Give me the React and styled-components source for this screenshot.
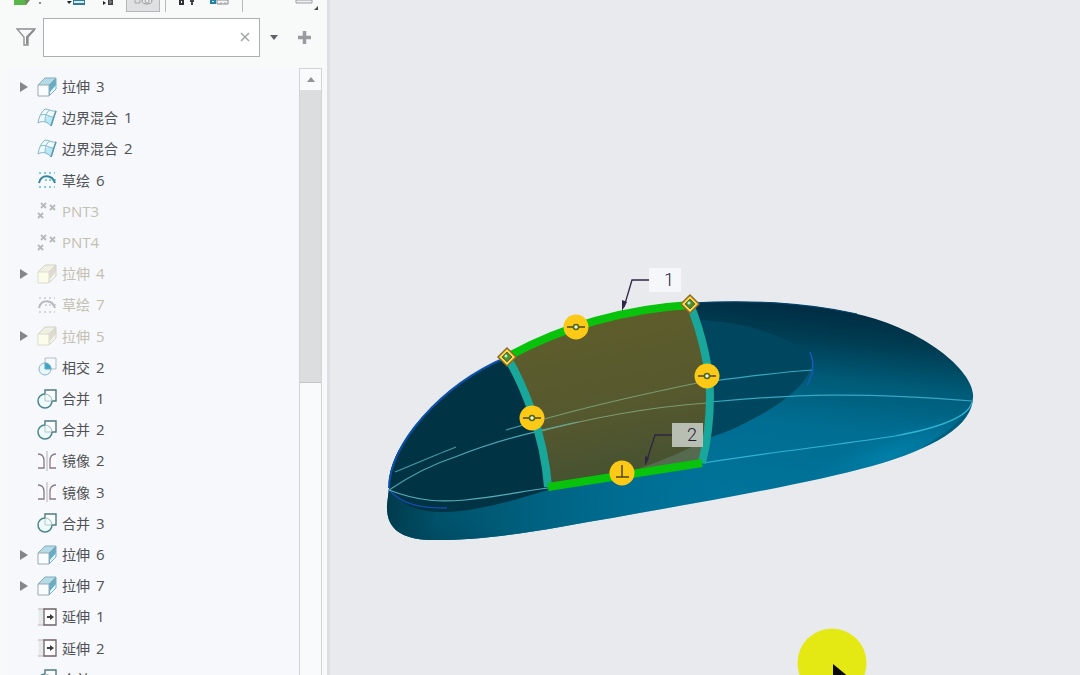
import React from "react";
import styled, { createGlobalStyle } from "styled-components";

const GlobalStyle = createGlobalStyle`
  *, *::before, *::after { box-sizing: border-box; }
  body {
    margin: 0;
    overflow: hidden;
    background: #e8eaee;
    color: #4b4c50;
    font: 14px/20px "Open Sans", "Noto Sans", "Noto Sans CJK SC", sans-serif;
  }
  button { font: inherit; color: inherit; }
`;

const Workspace = styled.div`
  display: flex;
  height: 100vh;
  overflow: hidden;
`;

const Sidebar = styled.aside`
  flex: 0 0 327px;
  display: flex;
  flex-direction: column;
  min-width: 0;
  min-height: 0;
  background: #f8fafa;
`;

const Toolbar = styled.div`
  display: flex;
  align-items: flex-start;
  flex: 0 0 17px;
  padding-left: 10px;
`;

const ToolButton = styled.button`
  display: flex;
  justify-content: center;
  width: ${(p) => p.$width}px;
  height: 12px;
  padding: 0;
  overflow: hidden;
  border: solid ${(p) => (p.$pressed ? "#b4b6b8" : "transparent")};
  border-width: 0 1px 1px;
  background: ${(p) => (p.$pressed ? "#dfe0e1" : "transparent")};
  svg { flex: none; }
`;

const Divider = styled.span`
  width: 1px;
  height: 12px;
  margin: 0 5px;
  background: #b8babb;
`;

const Push = styled.span`
  flex: 1;
`;

const FilterBar = styled.form`
  display: flex;
  align-items: center;
  flex: 0 0 40px;
  padding: 0 7px 0 16px;
`;

const FunnelLabel = styled.label`
  display: flex;
  width: 27px;
`;

const SearchField = styled.div`
  display: flex;
  flex: 1;
  min-width: 0;
  height: 39px;
  border: 1px solid #acaeb0;
  background: #fff;
`;

const SearchInput = styled.input`
  flex: 1;
  min-width: 0;
  padding: 0 8px;
  border: 0;
  outline: 0;
  background: transparent;
  font: inherit;
`;

const PlainButton = styled.button`
  display: flex;
  align-items: center;
  justify-content: center;
  width: ${(p) => p.$width || 28}px;
  height: 37px;
  padding: 0;
  border: 0;
  background: transparent;
`;

const TreePane = styled.div`
  display: flex;
  flex: 1;
  min-height: 0;
  margin: 10px 5px 0 8px;
  overflow: hidden;
  background: #f6f8fb;
`;

const TreeList = styled.ul`
  display: grid;
  flex: 1;
  grid-auto-rows: 1fr;
  height: 624px;
  margin: 0;
  padding: 4px 0 0 8px;
  box-sizing: content-box;
  list-style: none;
`;

const TreeRow = styled.li`
  display: flex;
  align-items: center;
  min-height: 0;
  color: ${(p) => (p.$muted ? "#c3c0b1" : "#505155")};
`;

const Toggle = styled.button`
  display: flex;
  align-items: center;
  justify-content: center;
  width: 16px;
  height: 20px;
  margin-right: 5px;
  padding: 0;
  border: 0;
  background: transparent;
  visibility: ${(p) => (p.$visible ? "visible" : "hidden")};
`;

const FeatureName = styled.span`
  padding-left: 5px;
  white-space: pre;
`;

const Latin = styled.span`
  padding-left: ${(p) => (p.$spaced ? 2 : 0)}px;
  font-size: 15px;
`;

const ScrollBar = styled.div`
  display: flex;
  flex-direction: column;
  width: 23px;
  margin-top: 1px;
  border: solid #d3d4d7;
  border-width: 1px 1px 0;
  background: #f8fafb;
`;

const ScrollUp = styled.button`
  display: flex;
  align-items: center;
  justify-content: center;
  height: 21px;
  padding: 0;
  border: 0;
  background: #f9fafb;
`;

const ScrollThumb = styled.div`
  height: 293px;
  border-bottom: 1px solid #c3c4c7;
  background: #dcdddf;
`;

const Viewport = styled.main`
  flex: 1;
  min-width: 0;
  border-left: 3px solid #dddfe4;
  background: #e8eaee;
  overflow: hidden;
  svg { display: block; }
`;

const DimensionText = styled.text`
  fill: #211c38;
  font: 300 18px "Roboto", "Liberation Sans", sans-serif;
`;

function ExtrudeIcon({ muted }) {
  const edge = muted ? "#d3d2c6" : "#82aebd";
  return (
    <svg width="20" height="20" viewBox="0 0 20 20" aria-hidden="true">
      <path d="M1 8 8 1H19L12 8Z" fill={muted ? "#efefe4" : "#b5dbe7"} />
      <path d="M12 8 19 1V12L12 19Z" fill={muted ? "#dedbd1" : "#68acc4"} />
      <path d="M13 15 19 8V12L13 18Z" fill={muted ? "#f7f7ee" : "#e0fbff"} />
      <path d="M1 8 8 1H19V12L12 19M12 8 19 1" fill="none" stroke={edge} />
      <path d="M1 8H12V19H1Z" fill={muted ? "#fbfcea" : "#fafdff"} stroke={muted ? "#dddccf" : "#9ba9af"} />
    </svg>
  );
}

function BlendIcon() {
  return (
    <svg width="20" height="20" viewBox="0 0 20 20" fill="none" aria-hidden="true">
      <path d="M1 15C2 9 4 4 8 1C12 1 15 4 19 3C17 8 16 12 14 18C11 14 6 12 1 15Z" fill="#effafd" />
      <path d="M11 7C13 8 15 9 16 9C16 12 15 15 14 18L8 14C9 11 9 9 11 7Z" fill="#b9e8f6" />
      <path d="M1 15C2 9 4 4 8 1C12 1 15 4 19 3C17 8 16 12 14 18C11 14 6 12 1 15ZM4 7C9 5 12 9 16 9M8 14C8 9 9 4 13 2" stroke="#86b5c4" />
      <path d="M19 3C17 8 16 12 14 18" stroke="#5e97ab" strokeWidth="1.5" />
    </svg>
  );
}

function SketchIcon({ muted }) {
  return (
    <svg width="20" height="20" viewBox="0 0 20 20" fill="none" aria-hidden="true">
      <path d="M2 3H18M2 10H4M8 10H10M12 10H14M17 10H19M2 17H18" stroke={muted ? "#d3d5dc" : "#7fcbe0"} strokeWidth="2" strokeDasharray="2 3" />
      <path d="M2 13C4 4 15 4 18 13" stroke={muted ? "#b8b6c0" : "#35869c"} strokeWidth="2" />
    </svg>
  );
}

function PointsIcon() {
  return (
    <svg width="20" height="20" viewBox="0 0 20 20" aria-hidden="true">
      <path d="m4 2 5 5m0-5L4 7m9-3 5 5m0-5-5 5M1 12l5 5m0-5-5 5" stroke="#b8b8bb" strokeWidth="1.8" />
    </svg>
  );
}

function IntersectIcon() {
  return (
    <svg width="20" height="20" viewBox="0 0 20 20" fill="none" aria-hidden="true">
      <path d="M8 1H19V12H8Z" stroke="#b3bfc8" />
      <circle cx="8" cy="12" r="6" fill="#e7f8fc" stroke="#8cb4c1" />
      <path d="M8 6A6 6 0 0 1 14 12H8Z" fill="#38a8c8" stroke="#62a7bc" />
    </svg>
  );
}

function MergeIcon() {
  return (
    <svg width="20" height="20" viewBox="0 0 20 20" fill="none" aria-hidden="true">
      <path d="M8 5V1H19V12H15" fill="#fbfdfd" stroke="#4f7b80" strokeWidth="1.4" />
      <circle cx="8" cy="12" r="7" fill="#eefbfa" />
      <path d="M15 12H8V5" stroke="#bcc5c9" />
      <path d="M8 5A7 7 0 1 0 15 12" stroke="#4b868d" strokeWidth="1.5" />
      <path d="M8 5A7 7 0 0 1 15 12" stroke="#9db5b9" />
    </svg>
  );
}

function MirrorIcon() {
  return (
    <svg width="20" height="20" viewBox="0 0 20 20" fill="none" aria-hidden="true">
      <path d="M2 3C6 3 7 7 7 10V17H2Z" fill="#fcfcfe" />
      <path d="M19 3C14 3 13 7 13 10V17H19Z" fill="#fcfcfe" />
      <path d="M1 3C6 3 7 7 7 10V17H1M19 3C14 3 13 7 13 10V17H19" stroke="#8a7a89" strokeWidth="1.3" />
      <path d="M10 0V20" stroke="#b3b0ba" />
    </svg>
  );
}

function ExtendIcon() {
  return (
    <svg width="20" height="20" viewBox="0 0 20 20" fill="none" aria-hidden="true">
      <path d="M1 2H8V18H1" fill="#eff1f3" stroke="#b8b1b6" />
      <path d="M3 3V17M5 3V17" stroke="#dfe2e6" />
      <path d="M7 2H19V18H7Z" fill="#fff" stroke="#6e6267" strokeWidth="1.3" />
      <path d="M10 9H13V7L17 10 13 13V11H10Z" fill="#3b3c40" />
    </svg>
  );
}

const featureIcons = {
  extrude: ExtrudeIcon,
  blend: BlendIcon,
  sketch: SketchIcon,
  points: PointsIcon,
  intersect: IntersectIcon,
  merge: MergeIcon,
  mirror: MirrorIcon,
  extend: ExtendIcon,
};

const features = [
  { name: "拉伸", number: 3, icon: "extrude", group: true },
  { name: "边界混合", number: 1, icon: "blend" },
  { name: "边界混合", number: 2, icon: "blend" },
  { name: "草绘", number: 6, icon: "sketch" },
  { name: "PNT3", icon: "points", muted: true },
  { name: "PNT4", icon: "points", muted: true },
  { name: "拉伸", number: 4, icon: "extrude", group: true, muted: true },
  { name: "草绘", number: 7, icon: "sketch", muted: true },
  { name: "拉伸", number: 5, icon: "extrude", group: true, muted: true },
  { name: "相交", number: 2, icon: "intersect" },
  { name: "合并", number: 1, icon: "merge" },
  { name: "合并", number: 2, icon: "merge" },
  { name: "镜像", number: 2, icon: "mirror" },
  { name: "镜像", number: 3, icon: "mirror" },
  { name: "合并", number: 3, icon: "merge" },
  { name: "拉伸", number: 6, icon: "extrude", group: true },
  { name: "拉伸", number: 7, icon: "extrude", group: true },
  { name: "延伸", number: 1, icon: "extend" },
  { name: "延伸", number: 2, icon: "extend" },
  { name: "合并", number: 4, icon: "merge" },
];

function Feature({ item }) {
  const Icon = featureIcons[item.icon];
  return (
    <TreeRow $muted={item.muted}>
      <Toggle type="button" $visible={item.group} aria-label={`展开 ${item.name}`}>
        <svg width="10" height="12" viewBox="0 0 10 12" aria-hidden="true">
          <path d="M1 1 9 6 1 11Z" fill="#85868a" />
        </svg>
      </Toggle>
      <Icon muted={item.muted} />
      <FeatureName>
        {item.number ? (
          <>
            {item.name}
            <Latin $spaced>{` ${item.number}`}</Latin>
          </>
        ) : (
          <Latin>{item.name}</Latin>
        )}
      </FeatureName>
    </TreeRow>
  );
}

function TopTools() {
  return (
    <Toolbar role="toolbar" aria-label="模型树工具">
      <ToolButton type="button" $width={38} aria-label="模型">
        <svg width="36" height="13" viewBox="0 0 36 13">
          <path d="M3 0H18L15 5H3Z" fill="#5ab54a" />
          <path d="M14 0H19L15 5Z" fill="#71865f" />
          <path d="M28 2H30V4H28Z" fill="#8c8d8e" />
        </svg>
      </ToolButton>
      <ToolButton type="button" $width={46} aria-label="显示">
        <svg width="44" height="13" viewBox="0 0 44 13">
          <path d="M18 1H23L20 4Z" fill="#222" />
          <path d="M24 0H36V5H24Z" fill="#35799a" />
          <path d="M25 1H35V3H25Z" fill="#d2edf5" />
        </svg>
      </ToolButton>
      <ToolButton type="button" $width={32} aria-label="展开全部">
        <svg width="30" height="13" viewBox="0 0 30 13">
          <path d="M8 1 11 3 8 5Z" fill="#222" />
          <path d="M13 0H18V5H13Z" fill="#404348" />
          <path d="M15 2H17M15 0V4" stroke="#92969a" />
        </svg>
      </ToolButton>
      <ToolButton type="button" $width={34} $pressed aria-label="设计树" aria-pressed="true">
        <svg width="32" height="12" viewBox="0 0 32 12" fill="none">
          <path d="M8 0V3H13V0" stroke="#a4a7a9" />
          <ellipse cx="20" cy="1" rx="5" ry="3" fill="#e9eaea" stroke="#929597" />
          <circle cx="20" cy="1" r="2" stroke="#a0a2a3" />
        </svg>
      </ToolButton>
      <Divider />
      <ToolButton type="button" $width={34} aria-label="设置">
        <svg width="32" height="13" viewBox="0 0 32 13">
          <path d="M8 0H11V4H8Z" fill="#fff" stroke="#303238" strokeWidth="2" />
          <path d="M18 0H22V2H21V5H19V2H18Z" fill="#42464a" />
        </svg>
      </ToolButton>
      <ToolButton type="button" $width={32} aria-label="列">
        <svg width="30" height="13" viewBox="0 0 30 13">
          <path d="M5 0H9V3H5Z" fill="#dff7ff" stroke="#247fa5" strokeWidth="2" />
          <path d="M11 0H22V4H11Z" fill="#f5f7f7" stroke="#85898c" />
          <path d="M14 3H16M18 3H20" stroke="#9a9ea1" />
        </svg>
      </ToolButton>
      <Divider />
      <Push />
      <ToolButton type="button" $width={37} aria-label="面板选项">
        <svg width="35" height="13" viewBox="0 0 35 13">
          <path d="M5 0H21V3H5Z" fill="#eff0f1" stroke="#9b9da2" />
          <path d="M27 6V10H23Z" fill="#474a4e" />
        </svg>
      </ToolButton>
    </Toolbar>
  );
}

function TangentMarker({ x, y, normal }) {
  return (
    <g transform={`translate(${x} ${y})`}>
      <circle r="12.5" fill="#fbc916" />
      {normal ? (
        <path d="M-6 4H7M0 4V-8" stroke="#514519" strokeWidth="1.5" />
      ) : (
        <>
          <path d="M-9 0H9" stroke="#4c481d" strokeWidth="1.5" />
          <circle r="2.5" fill="#f5f5ce" stroke="#49671e" strokeWidth="1.5" />
        </>
      )}
    </g>
  );
}

function CornerMarker({ x, y }) {
  return (
    <g transform={`translate(${x} ${y})`}>
      <path d="M0-9 9 0 0 9-9 0Z" fill="#fbd84e" stroke="#8a6a24" strokeWidth="1.5" />
      <path d="M0-5 5 0 0 5-5 0Z" fill="#4a8f35" stroke="#6c651d" />
      <circle cx="-1" cy="-1" r="1.5" fill="#b8efcb" />
    </g>
  );
}

function SurfaceModel() {
  return (
    <svg width="750" height="675" viewBox="330 0 750 675" role="img" aria-label="曲面模型">
      <defs>
        <linearGradient id="shell" gradientUnits="userSpaceOnUse" x1="760" y1="302" x2="740" y2="494">
          <stop offset="0" stopColor="#002d43" />
          <stop offset="0.15" stopColor="#003c52" />
          <stop offset="0.36" stopColor="#005b77" />
          <stop offset="0.6" stopColor="#006d91" />
          <stop offset="1" stopColor="#00739a" />
        </linearGradient>
        <linearGradient id="noseShade" gradientUnits="userSpaceOnUse" x1="386" y1="500" x2="720" y2="500">
          <stop offset="0" stopColor="#003a4b" />
          <stop offset="0.15" stopColor="#005169" />
          <stop offset="0.5" stopColor="#006484" />
          <stop offset="1" stopColor="#006d94" stopOpacity="0" />
        </linearGradient>
        <radialGradient id="tailLight" gradientUnits="userSpaceOnUse" cx="0" cy="0" r="1" gradientTransform="translate(890 455) rotate(-20) scale(90 24)">
          <stop offset="0" stopColor="#008bb5" stopOpacity="0.6" />
          <stop offset="1" stopColor="#007da7" stopOpacity="0" />
        </radialGradient>
        <linearGradient id="patch" x1="0" y1="0" x2="0.2" y2="1">
          <stop offset="0" stopColor="#605f2b" />
          <stop offset="0.65" stopColor="#56582e" />
          <stop offset="1" stopColor="#465231" />
        </linearGradient>
        <radialGradient id="lowerFade" gradientUnits="userSpaceOnUse" cx="0" cy="0" r="1" gradientTransform="translate(410 543) scale(130 24)">
          <stop offset="0" stopColor="#003d54" stopOpacity="0.5" />
          <stop offset="1" stopColor="#004a66" stopOpacity="0" />
        </radialGradient>
        <clipPath id="bodyClip">
          <path d="M389 488C387 446 439 386 507 357C562 327 625 307 690 303C750 300 802 302 857 314C926 330 971 370 973 394C975 425 935 448 872 466C796 487 667 508 560 527C515 535 465 541 430 540C400 539 386 528 387 505Z" />
        </clipPath>
      </defs>

      <g clipPath="url(#bodyClip)">
        <path d="M380 290H980V550H380Z" fill="url(#shell)" />
        <path d="M380 450H720V550H380Z" fill="url(#noseShade)" />
        <path d="M380 510H560V550H380Z" fill="url(#lowerFade)" />
        <path d="M780 400H980V510H780Z" fill="url(#tailLight)" />
        <path d="M974 402C966 428 944 440 915 453C940 436 962 424 972 403Z" fill="#005775" opacity="0.7" />
      </g>

      <path d="M694 320C742 321 780 333 811 354C817 376 790 398 762 414C739 427 723 434 696 442Z" fill="#00465e" />
      <path d="M389 490C389 446 439 386 507 357L535 416 548 490C505 503 469 513 438 512C412 511 398 501 389 490Z" fill="#003445" />
      <path d="M507 357C562 327 625 307 690 304C706 343 713 384 710 414L702 463 548 487C541 438 529 393 507 357Z" fill="url(#patch)" />
      <path d="M639 468C666 460 683 451 705 441L702 463Z" fill="#566a4f" />

      <g fill="none" strokeWidth="1.2">
        <path d="M389 488C389 446 439 386 507 357" stroke="#0b50ab" strokeWidth="2" />
        <path d="M390 491C404 506 424 508 447 508" stroke="#154cac" strokeWidth="1.5" />
        <path d="M389 490C407 478 430 465 455 457C500 439 538 431 578 422" stroke="#4fa4b2" />
        <path d="M395 472C417 463 438 454 456 447M506 430L534 422" stroke="#4899a7" />
        <path d="M534 433C590 418 651 407 707 403M534 422C592 405 648 393 707 381" stroke="#799d70" />
        <path d="M710 402C796 394 859 392 972 401M713 381C750 376 780 372 813 370" stroke="#36a8c4" />
        <path d="M389 490C420 502 442 502 465 500C499 497 523 491 548 488" stroke="#56adba" />
        <path d="M703 463C780 451 830 446 895 436C944 427 969 416 972 402" stroke="#31b4d4" />
        <path d="M810 352C814 362 814 374 807 385" stroke="#1759bb" strokeWidth="1.5" />
        <path d="M690 303C750 300 802 302 857 314" stroke="#00436b" />
      </g>

      <g fill="none">
        <path d="M507 357C522 382 544 432 548 487" stroke="#18a79a" strokeWidth="8" />
        <path d="M690 304C703 337 710 371 710 395C710 423 707 443 702 463" stroke="#18a79a" strokeWidth="8" />
        <path d="M507 357C562 327 625 309 690 305" stroke="#09c20c" strokeWidth="8" />
        <path d="M548 487L702 463" stroke="#09c20c" strokeWidth="8" />
      </g>

      <CornerMarker x={507} y={357} />
      <CornerMarker x={690} y={304} />
      <TangentMarker x={576} y={327} />
      <TangentMarker x={707} y={376} />
      <TangentMarker x={532} y={418} />
      <TangentMarker x={622} y={473} normal />

      <g fill="none" stroke="#302545" strokeWidth="1.3">
        <path d="M649 280H632L624 307M672 435H655L646 463" />
      </g>
      <path d="M622 311 622 300 627 302ZM645 466 645 456 649 458Z" fill="#302545" />
      <path d="M649 268H681V292H649Z" fill="#f6f7fa" />
      <path d="M672 423H703V447H672Z" fill="#b9beb3" />
      <DimensionText x="664" y="286">1</DimensionText>
      <DimensionText x="687" y="441">2</DimensionText>

      <circle cx="832" cy="663" r="34.5" fill="#e4e914" />
      <path d="M833 664V690L850 678Z" fill="#090a09" />
    </svg>
  );
}

export default function App() {
  return (
    <>
      <GlobalStyle />
      <Workspace>
        <Sidebar>
          <TopTools />
          <FilterBar onSubmit={(event) => event.preventDefault()}>
            <FunnelLabel htmlFor="tree-filter" aria-label="筛选">
              <svg width="20" height="20" viewBox="0 0 20 20" aria-hidden="true">
                <path d="M1 2H19L12 10V18H8V10Z" fill="#fafafa" stroke="#8b8d90" strokeWidth="1.3" />
                <path d="M18 3 11 10V17" fill="none" stroke="#8b8d90" strokeWidth="2" />
              </svg>
            </FunnelLabel>
            <SearchField>
              <SearchInput id="tree-filter" type="text" />
              <PlainButton type="reset" aria-label="清除">
                <svg width="10" height="10" viewBox="0 0 10 10">
                  <path d="m1 1 8 8m0-8L1 9" stroke="#a2a3a5" strokeWidth="1.5" />
                </svg>
              </PlainButton>
            </SearchField>
            <PlainButton type="button" aria-label="筛选选项">
              <svg width="8" height="5" viewBox="0 0 8 5">
                <path d="M0 0H8L4 5Z" fill="#606267" />
              </svg>
            </PlainButton>
            <PlainButton type="button" $width={32} aria-label="添加">
              <svg width="13" height="13" viewBox="0 0 13 13">
                <path d="M6.5 0V13M0 6.5H13" stroke="#9a9b9e" strokeWidth="3.5" />
              </svg>
            </PlainButton>
          </FilterBar>
          <TreePane>
            <TreeList aria-label="模型树">
              {features.map((item) => (
                <Feature key={`${item.name}${item.number}`} item={item} />
              ))}
            </TreeList>
            <ScrollBar>
              <ScrollUp type="button" aria-label="向上滚动">
                <svg width="8" height="5" viewBox="0 0 8 5">
                  <path d="M0 5 4 0 8 5Z" fill="#929397" />
                </svg>
              </ScrollUp>
              <ScrollThumb />
            </ScrollBar>
          </TreePane>
        </Sidebar>
        <Viewport>
          <SurfaceModel />
        </Viewport>
      </Workspace>
    </>
  );
}
